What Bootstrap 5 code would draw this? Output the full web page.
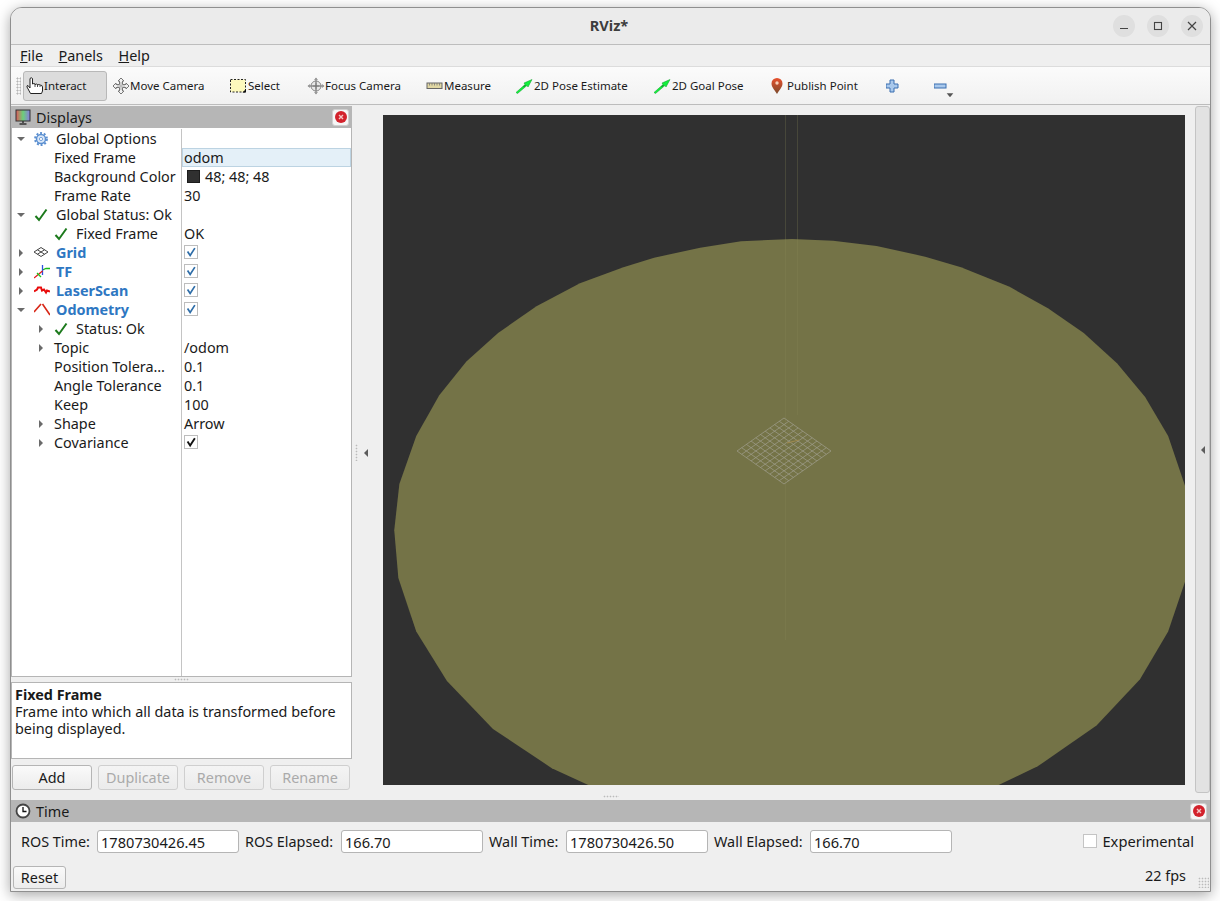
<!DOCTYPE html>
<html lang="en">
<head>
    <meta charset="UTF-8">
    <title>RViz*</title>
    <link href="https://cdn.jsdelivr.net/npm/bootstrap@5.3.3/dist/css/bootstrap.min.css" rel="stylesheet">
    <style>
        html, body { height: 100%; overflow: hidden; background: #fff; }
        body { font-family: "Noto Sans", "Liberation Sans", sans-serif; font-size: 14.4px; color: #1a1a1a; }
        .app-win { margin: 7px 0 0 10px; width: 1201px; height: 885px; background: #efefef; border: 1px solid #8f8f8f; border-radius: 12px 12px 0 0; box-shadow: 0 3px 14px rgba(0,0,0,.35); overflow: hidden; }
        .title-bar { height: 37px; background: #ebebeb; border-bottom: 1px solid #bdbdbd; padding-right: 7px; flex: none; }
        .title-side { width: 90px; margin-left: 7px; gap: 12px; }
        .title-text { font-weight: 700; font-size: 14.6px; color: #3d3d3d; padding-left: 4px; }
        .win-btn { width: 22px; height: 22px; border-radius: 50%; background: #dfdfdf; border: 0; padding: 0; }
        .menu-row { height: 21px; padding-left: 9px; gap: 15.5px; line-height: 21px; flex: none; }
        .tool-row { height: 39px; flex: none; background: linear-gradient(#fbfbfb, #f1f1f1); border-top: 1px solid #dcdcdc; border-bottom: 1px solid #bcbcbc; display: grid; grid-template-columns: 12px 85px 118px 77px 119px 90px 138px 117px 115px 48px 30px; align-items: center; font-size: 11.5px; }
        .tool-grip { width: 5px; height: 18px; margin-left: 5px; background-image: radial-gradient(#b5b5b5 45%, transparent 50%); background-size: 3px 3px; }
        .tool-item { display: flex; align-items: center; padding-left: 4px; padding-top: 1px; height: 30px; white-space: nowrap; }
        .tool-on { width: 84px; padding-left: 2px; background: #dcdcdc; border: 1px solid #b8b8b8; border-radius: 3px; }
        .tool-item svg { width: 18px; height: 18px; flex: none; margin-top: -1px; }
        .tool-item .tool-pin { width: 16px; }
        .tool-item .tool-caret { width: 10px; height: 10px; left: 15px; top: 20px; }
        .main-row { height: 695px; flex: none; }
        .left-dock { width: 341px; flex: none; padding-top: 1px; }
        .dock-head { height: 22px; background: #b6b6b6; flex: none; padding: 0 3px 0 4px; }
        .head-title { font-size: 14.4px; margin-left: 5px; padding-top: 1px; }
        .dock-x { width: 17px; height: 17px; background: #f6f6f6; border: 1px solid #d0d0d0; border-radius: 3px; padding: 0; display: flex; align-items: center; justify-content: center; }
        .prop-tree { height: 549px; background: #fff; border: 1px solid #b5b5b5; border-top: 0; width: 341px; line-height: 19px; }
        .prop-line { height: 19px; flex: none; }
        .prop-line:first-child { margin-top: 1px; }
        .prop-fill { flex: 1; }
        .prop-name { width: 169px; flex: none; padding-left: 0; white-space: nowrap; overflow: hidden; }
        .prop-val { flex: 1; border-left: 1px solid #c4c4c4; padding-left: 2px; white-space: nowrap; }
        .prop-sel { background: #e4f0f8; box-shadow: inset 0 0 0 1px #bcd3e2; }
        .lvl-one { padding-left: 20px; }
        .arrow-slot { width: 18px; margin-right: 4px; flex: none; display: flex; justify-content: center; }
        .arrow-right { width: 0; height: 0; border-left: 4px solid #6a6a6a; border-top: 4px solid transparent; border-bottom: 4px solid transparent; }
        .arrow-down { width: 0; height: 0; border-top: 4px solid #6a6a6a; border-left: 4px solid transparent; border-right: 4px solid transparent; }
        .icon-slot { width: 14px; height: 14px; margin-right: 8px; flex: none; }
        .icon-wide { width: 16px; margin-right: 6px; }
        .disp-name { color: #2e77c2; font-weight: 700; }
        .chk-box { width: 14px; height: 14px; margin: 2px 0 0 0; background: #fff; border: 1px solid #bdbdbd; display: block; }
        .chk-box svg { display: block; }
        .color-swatch { width: 13px; height: 13px; background: #303030; border: 1px solid #1c1c1c; margin: 0 5px 0 3px; }
        .grip-h { height: 5px; flex: none; background: radial-gradient(#bbb 40%, transparent 50%) center 1px / 3px 3px repeat-x; background-size: 3px 3px; background-clip: content-box; padding: 0 163px; }
        .help-box { height: 77px; flex: none; background: #fff; border: 1px solid #b5b5b5; padding: 3px; line-height: 17px; }
        .dock-btns { margin-top: 6px; padding-left: 1px; gap: 6px; }
        .btn-qt { width: 80px; height: 25px; padding: 1px 0 0; font-size: 14.4px; line-height: 1; color: #1a1a1a; background: linear-gradient(#fafafa, #ececec); border: 1px solid #b5b5b5; border-radius: 3px; }
        .btn-qt:disabled { opacity: 1; color: #aaa; background: linear-gradient(#f4f4f4, #ebebeb); border-color: #cfcfcf; }
        .side-gap { width: 31px; flex: none; padding-left: 3px; gap: 6px; }
        .grip-v { width: 3px; height: 17px; background-image: radial-gradient(#bbb 40%, transparent 50%); background-size: 3px 3px; }
        .arrow-left { width: 0; height: 0; border-right: 4px solid #5c5c5c; border-top: 4px solid transparent; border-bottom: 4px solid transparent; }
        .scene-box { width: 802px; height: 670px; margin-top: 10px; background: #303030; flex: none; }
        .scene-box svg { display: block; }
        .right-tab { width: 15px; height: 687px; margin: 1px 0 0 10px; background: #e2e2e2; border: 1px solid #c4c4c4; border-radius: 3px; flex: none; }
        .grip-b { width: 16px; height: 3px; bottom: 2px; background-image: radial-gradient(#bbb 40%, transparent 50%); background-size: 3px 3px; }
        .time-grid { display: grid; grid-template-columns: 10px 76px 142px 102px 142px 83px 142px 102px 142px 1fr; align-items: center; height: 23px; margin-top: 8px; flex: none; }
        .time-lbl { padding-left: 6px; white-space: nowrap; }
        .time-lbl-first { padding-left: 0; }
        .time-input { height: 23px; padding: 0 3px; font-size: 14.6px; line-height: 21px; color: #1a1a1a; border: 1px solid #b5b5b5; border-radius: 3px; }
        .exp-wrap { justify-self: end; padding-right: 16px; gap: 5px; font-size: 14.7px; }
        .exp-box { width: 14px; height: 14px; background: #fff; border: 1px solid #c4c4c4; }
        .foot-row { height: 23px; margin-top: 13px; padding-left: 2px; padding-right: 24px; flex: none; }
        .btn-reset { width: 53px; height: 23px; }
        .resize-grip { width: 11px; height: 11px; right: 1px; bottom: 1px; background-image: radial-gradient(#bbb 40%, transparent 50%); background-size: 3px 3px; }
    </style>
</head>
<body class="m-0">

<svg width="0" height="0" class="position-absolute">
    <defs>
        <symbol id="i-check" viewBox="0 0 14 14"><path d="M1.5 8 L5 12 L12.5 1.5" fill="none" stroke="#1c7a1c" stroke-width="2"/></symbol>
        <symbol id="i-tick-blue" viewBox="0 0 14 14"><path d="M3 6.5 L6 11 L11.5 2.5" fill="none" stroke="#2e6da8" stroke-width="2"/></symbol>
        <symbol id="i-tick-black" viewBox="0 0 14 14"><path d="M3 6.5 L6 11 L11.5 2.5" fill="none" stroke="#111" stroke-width="2.2"/></symbol>
        <symbol id="i-arrow" viewBox="0 0 18 18"><path d="M0 15.5 L9 7.5 L8 6 L16 2.5 L12 10 L11 8.5 L1.5 16.5 Z" fill="#12f03c" stroke="#0a9a26" stroke-width=".5"/><path d="M7.5 10 L9.5 8" stroke="#0a5a1a" stroke-width=".8"/></symbol>
        <symbol id="i-close" viewBox="0 0 14 14"><circle cx="7" cy="7" r="6" fill="#d3222c"/><path d="M5 5 L9 9 M9 5 L5 9" stroke="#f6c6c6" stroke-width="1.4"/></symbol>
    </defs>
</svg>

<div class="app-win d-flex flex-column">

    <!-- title bar -->
    <header class="title-bar d-flex align-items-center justify-content-between">
        <div class="title-side"></div>
        <div class="title-text">RViz*</div>
        <div class="d-flex title-side">
            <button class="win-btn d-flex align-items-center justify-content-center"><svg width="10" height="10"><path d="M1 7.5 H9" stroke="#444" stroke-width="1.2"/></svg></button>
            <button class="win-btn d-flex align-items-center justify-content-center"><svg width="10" height="10"><rect x="1.5" y="1.5" width="7" height="7" fill="none" stroke="#444" stroke-width="1.1"/></svg></button>
            <button class="win-btn d-flex align-items-center justify-content-center"><svg width="10" height="10"><path d="M1 1 L9 9 M9 1 L1 9" stroke="#444" stroke-width="1.2"/></svg></button>
        </div>
    </header>

    <!-- menu -->
    <nav class="menu-row d-flex">
        <span><u>F</u>ile</span>
        <span><u>P</u>anels</span>
        <span><u>H</u>elp</span>
    </nav>

    <!-- toolbar -->
    <div class="tool-row">
        <div class="tool-grip"></div>
        <div class="tool-item tool-on">
            <svg viewBox="0 0 18 18"><path d="M4.5 16.5 L1 10 Q.5 8.5 2 8.5 L4 11 V1.5 Q5.2 0 6.5 1.5 V7 Q8 6 9 7 V7.5 Q10.5 6.5 11.5 7.5 V8 Q13 7 14 8 Q16.5 8 16.5 10 V14 L15.5 16.5 Z" fill="#fff" stroke="#222" stroke-width="1"/><path d="M9 7.5 V10 M11.5 8 V10 M14 8.5 V10" stroke="#222" stroke-width=".8"/></svg>
            <span>Interact</span>
        </div>
        <div class="tool-item">
            <svg viewBox="0 0 18 18"><path d="M9 1 L12 4 H10.5 V7.5 H14 V6 L17 9 L14 12 V10.5 H10.5 V14 H12 L9 17 L6 14 H7.5 V10.5 H4 V12 L1 9 L4 6 V7.5 H7.5 V4 H6 Z" fill="#f2f2f2" stroke="#777" stroke-width="1"/><path d="M5 9 H13 M9 5 V13" stroke="#aaa"/></svg>
            <span>Move Camera</span>
        </div>
        <div class="tool-item">
            <svg viewBox="0 0 18 18"><rect x=".5" y="2.5" width="15" height="12.5" fill="#fdf9bd" stroke="#222" stroke-dasharray="2 1.5"/><path d="M12.5 15.5 L16 15.5 L16 12 Z" fill="#111"/></svg>
            <span>Select</span>
        </div>
        <div class="tool-item">
            <svg viewBox="0 0 18 18"><circle cx="9" cy="9" r="5" fill="#e8e8e8" stroke="#888"/><path d="M1 9 H17 M9 1 V17 M5.5 9 H12.5 M9 5.5 V12.5" stroke="#777"/><path d="M9 .5 L11 3 H7 Z M9 17.5 L11 15 H7 Z M.5 9 L3 7 V11 Z M17.5 9 L15 7 V11 Z" fill="#999"/></svg>
            <span>Focus Camera</span>
        </div>
        <div class="tool-item">
            <svg viewBox="0 0 18 18"><rect x="1" y="6" width="15" height="5.5" fill="#e0d7a4" stroke="#666"/><path d="M3.5 6 V8.5 M6 6 V8.5 M8.5 6 V8.5 M11 6 V8.5 M13.5 6 V8.5" stroke="#777" stroke-width=".8"/></svg>
            <span>Measure</span>
        </div>
        <div class="tool-item"><svg><use href="#i-arrow"/></svg><span>2D Pose Estimate</span></div>
        <div class="tool-item"><svg><use href="#i-arrow"/></svg><span>2D Goal Pose</span></div>
        <div class="tool-item">
            <svg class="tool-pin" viewBox="3 0 16 18"><defs><linearGradient id="pin" x1="0" y1="0" x2="0" y2="1"><stop offset="0" stop-color="#e8502c"/><stop offset="1" stop-color="#7a4a2c"/></linearGradient></defs><path d="M9 17 C6 12 3.5 10 3.5 6.5 A5.5 5.5 0 0 1 14.5 6.5 C14.5 10 12 12 9 17 Z" fill="url(#pin)"/><circle cx="9" cy="6" r="1.7" fill="#f6d0b8"/></svg>
            <span>Publish Point</span>
        </div>
        <div class="tool-item">
            <svg viewBox="3 0 18 18"><path d="M7 3 H11 V7 H15 V11 H11 V15 H7 V11 H3 V7 H7 Z" fill="#a8c8ec" stroke="#3a6fb0"/></svg>
        </div>
        <div class="tool-item position-relative">
            <svg viewBox="3 0 18 18"><rect x="3" y="7" width="12" height="4" fill="#a8c8ec" stroke="#3a6fb0"/></svg>
            <svg class="position-absolute tool-caret" viewBox="0 0 18 18"><path d="M3 6 H15 L9 13 Z" fill="#555"/></svg>
        </div>
    </div>

    <!-- main area -->
    <div class="main-row d-flex position-relative">
        <div class="left-dock d-flex flex-column">
            <div class="dock-head d-flex align-items-center">
                <svg width="16" height="16" viewBox="0 0 16 16"><defs><linearGradient id="scr" x1="0" x2="1" y1="0" y2="0"><stop offset="0" stop-color="#e05a5a"/><stop offset=".5" stop-color="#6ccf7a"/><stop offset="1" stop-color="#8a7ae0"/></linearGradient></defs><rect x="1" y="1" width="14" height="11" fill="url(#scr)" stroke="#333"/><path d="M8 12 V14 M4.5 15 H11.5" stroke="#333" stroke-width="1.5"/></svg>
                <span class="head-title flex-grow-1">Displays</span>
                <button class="dock-x"><svg width="14" height="14"><use href="#i-close"/></svg></button>
            </div>
            <div class="prop-tree d-flex flex-column">
                <div class="prop-line d-flex"><div class="prop-name d-flex align-items-center"><span class="arrow-slot"><i class="arrow-down"></i></span>
                    <svg class="icon-slot" viewBox="0 0 14 14"><circle cx="7" cy="7" r="4.5" fill="#dbe8f8" stroke="#5b8fd0" stroke-width="1.5"/><circle cx="7" cy="7" r="6" fill="none" stroke="#5b8fd0" stroke-width="1.8" stroke-dasharray="2 1.8"/><circle cx="7" cy="7" r="1.6" fill="#fff" stroke="#5b8fd0" stroke-width=".8"/></svg>
                    <span>Global Options</span></div><div class="prop-val"></div></div>
                <div class="prop-line d-flex"><div class="prop-name lvl-one d-flex align-items-center"><span class="arrow-slot"></span><span>Fixed Frame</span></div><div class="prop-val prop-sel">odom</div></div>
                <div class="prop-line d-flex"><div class="prop-name lvl-one d-flex align-items-center"><span class="arrow-slot"></span><span>Background Color</span></div><div class="prop-val d-flex align-items-center"><span class="color-swatch"></span>48; 48; 48</div></div>
                <div class="prop-line d-flex"><div class="prop-name lvl-one d-flex align-items-center"><span class="arrow-slot"></span><span>Frame Rate</span></div><div class="prop-val">30</div></div>
                <div class="prop-line d-flex"><div class="prop-name d-flex align-items-center"><span class="arrow-slot"><i class="arrow-down"></i></span><svg class="icon-slot"><use href="#i-check"/></svg><span>Global Status: Ok</span></div><div class="prop-val"></div></div>
                <div class="prop-line d-flex"><div class="prop-name lvl-one d-flex align-items-center"><span class="arrow-slot"></span><svg class="icon-slot"><use href="#i-check"/></svg><span>Fixed Frame</span></div><div class="prop-val">OK</div></div>
                <div class="prop-line d-flex"><div class="prop-name d-flex align-items-center"><span class="arrow-slot"><i class="arrow-right"></i></span>
                    <svg class="icon-slot" viewBox="0 0 14 14"><path d="M7 1.5 L14 6 L7 10.5 L0 6 Z M3.5 3.8 L10.5 8.2 M10.5 3.8 L3.5 8.2" fill="none" stroke="#444"/></svg>
                    <span class="disp-name">Grid</span></div><div class="prop-val"><span class="chk-box"><svg width="12" height="12" viewBox="0 0 14 14"><use href="#i-tick-blue"/></svg></span></div></div>
                <div class="prop-line d-flex"><div class="prop-name d-flex align-items-center"><span class="arrow-slot"><i class="arrow-right"></i></span>
                    <svg class="icon-slot icon-wide" viewBox="0 0 16 14"><path d="M8.5 5 L12 3.5 H16" stroke="#18b818" fill="none" stroke-width="1.3"/><path d="M8.5 0 V10" stroke="#3050e0" stroke-width="1.3"/><path d="M8.5 6 L0 13" stroke="#e01818" stroke-width="1.3"/><path d="M3 8 L7 12" stroke="#18c818" stroke-width="1.3"/></svg>
                    <span class="disp-name">TF</span></div><div class="prop-val"><span class="chk-box"><svg width="12" height="12" viewBox="0 0 14 14"><use href="#i-tick-blue"/></svg></span></div></div>
                <div class="prop-line d-flex"><div class="prop-name d-flex align-items-center"><span class="arrow-slot"><i class="arrow-right"></i></span>
                    <svg class="icon-slot icon-wide" viewBox="0 0 16 14"><path d="M0 7.5 L3 5.5 L4 3.5 L7 3.5 L8 6.5 L10 5.5 L12 8.5 L13 6.5 L16 7.5" fill="none" stroke="#e80c0c" stroke-width="2"/></svg>
                    <span class="disp-name">LaserScan</span></div><div class="prop-val"><span class="chk-box"><svg width="12" height="12" viewBox="0 0 14 14"><use href="#i-tick-blue"/></svg></span></div></div>
                <div class="prop-line d-flex"><div class="prop-name d-flex align-items-center"><span class="arrow-slot"><i class="arrow-down"></i></span>
                    <svg class="icon-slot icon-wide" viewBox="0 0 16 14"><path d="M0 9 L7 1 M8.5 1 L16 12" fill="none" stroke="#d82818" stroke-width="1.6"/></svg>
                    <span class="disp-name">Odometry</span></div><div class="prop-val"><span class="chk-box"><svg width="12" height="12" viewBox="0 0 14 14"><use href="#i-tick-blue"/></svg></span></div></div>
                <div class="prop-line d-flex"><div class="prop-name lvl-one d-flex align-items-center"><span class="arrow-slot"><i class="arrow-right"></i></span><svg class="icon-slot"><use href="#i-check"/></svg><span>Status: Ok</span></div><div class="prop-val"></div></div>
                <div class="prop-line d-flex"><div class="prop-name lvl-one d-flex align-items-center"><span class="arrow-slot"><i class="arrow-right"></i></span><span>Topic</span></div><div class="prop-val">/odom</div></div>
                <div class="prop-line d-flex"><div class="prop-name lvl-one d-flex align-items-center"><span class="arrow-slot"></span><span>Position Tolera…</span></div><div class="prop-val">0.1</div></div>
                <div class="prop-line d-flex"><div class="prop-name lvl-one d-flex align-items-center"><span class="arrow-slot"></span><span>Angle Tolerance</span></div><div class="prop-val">0.1</div></div>
                <div class="prop-line d-flex"><div class="prop-name lvl-one d-flex align-items-center"><span class="arrow-slot"></span><span>Keep</span></div><div class="prop-val">100</div></div>
                <div class="prop-line d-flex"><div class="prop-name lvl-one d-flex align-items-center"><span class="arrow-slot"><i class="arrow-right"></i></span><span>Shape</span></div><div class="prop-val">Arrow</div></div>
                <div class="prop-line d-flex"><div class="prop-name lvl-one d-flex align-items-center"><span class="arrow-slot"><i class="arrow-right"></i></span><span>Covariance</span></div><div class="prop-val"><span class="chk-box"><svg width="12" height="12" viewBox="0 0 14 14"><use href="#i-tick-black"/></svg></span></div></div>
                <div class="prop-fill d-flex"><div class="prop-name"></div><div class="prop-val"></div></div>
            </div>
            <div class="grip-h"></div>
            <div class="help-box">
                <strong>Fixed Frame</strong><br>
                Frame into which all data is transformed before being displayed.
            </div>
            <div class="dock-btns d-flex">
                <button class="btn btn-qt">Add</button>
                <button class="btn btn-qt" disabled>Duplicate</button>
                <button class="btn btn-qt" disabled>Remove</button>
                <button class="btn btn-qt" disabled>Rename</button>
            </div>
        </div>

        <div class="side-gap d-flex align-items-center">
            <div class="grip-v"></div>
            <div class="arrow-left"></div>
        </div>

        <div class="scene-box overflow-hidden">
            <svg width="802" height="670" viewBox="0 0 802 670">
                <!-- polygon points taken from a stretched crop, so scale back to pixels -->
                <polygon fill="#747347" transform="translate(0 115) scale(.5115 .3552)" points="22,845 30,980 65,1130 125,1270 215,1405 330,1515 405,1565 1200,1565 1280,1510 1395,1395 1480,1265 1535,1130 1568,990 1580,845 1568,720 1535,580 1490,470 1435,375 1370,290 1300,220 1225,160 1130,105 1060,75 965,45 880,30 800,25 700,32 620,50 530,78 470,105 385,150 300,215 225,290 163,370 110,465 65,580 32,715"/>
                <path d="M402.5 0 V525 M414.5 0 V300" stroke="#8a8a5a" stroke-width="1" opacity=".25"/>
                <path id="groundGrid" fill="none" stroke="#a09f8e" stroke-width=".7"/>
                <path d="M404 328 L416 325" stroke="#a08a50" stroke-width="1"/>
            </svg>
        </div>

        <div class="right-tab d-flex align-items-center justify-content-center"><div class="arrow-left"></div></div>
        <div class="grip-b position-absolute start-50 translate-middle-x"></div>
    </div>

    <!-- time panel -->
    <div class="dock-head d-flex align-items-center">
        <svg width="16" height="16" viewBox="0 0 16 16"><circle cx="8" cy="8" r="6.5" fill="#fff" stroke="#444" stroke-width="1.8"/><path d="M8 4 V8.5 H11.5" fill="none" stroke="#111" stroke-width="1.3"/></svg>
        <span class="head-title flex-grow-1">Time</span>
        <button class="dock-x"><svg width="14" height="14"><use href="#i-close"/></svg></button>
    </div>
    <div class="time-grid">
        <div></div>
        <label class="time-lbl time-lbl-first">ROS Time:</label>
        <input class="form-control time-input" value="1780730426.45">
        <label class="time-lbl">ROS Elapsed:</label>
        <input class="form-control time-input" value="166.70">
        <label class="time-lbl">Wall Time:</label>
        <input class="form-control time-input" value="1780730426.50">
        <label class="time-lbl">Wall Elapsed:</label>
        <input class="form-control time-input" value="166.70">
        <div class="exp-wrap d-flex align-items-center"><span class="exp-box"></span><span>Experimental</span></div>
    </div>
    <div class="foot-row d-flex justify-content-between align-items-center position-relative">
        <button class="btn btn-qt btn-reset">Reset</button>
        <span class="pb-1">22 fps</span>
        <div class="resize-grip position-absolute"></div>
    </div>
</div>

<script>
    // ground grid: 10 x 10 cells projected to a flat diamond
    const cx = 401, top_y = 303, hw = 47, hh = 33, n = 10;
    let d = '';
    for (let i = 0; i <= n; i++) {
        const t = i / n;
        d += `M${cx - hw * t} ${top_y + hh * t} L${cx + hw - hw * t} ${top_y + hh + hh * t} `;
        d += `M${cx + hw * t} ${top_y + hh * t} L${cx - hw + hw * t} ${top_y + hh + hh * t} `;
    }
    document.getElementById('groundGrid').setAttribute('d', d);
</script>
<script src="https://cdn.jsdelivr.net/npm/bootstrap@5.3.3/dist/js/bootstrap.bundle.min.js"></script>
</body>
</html>
